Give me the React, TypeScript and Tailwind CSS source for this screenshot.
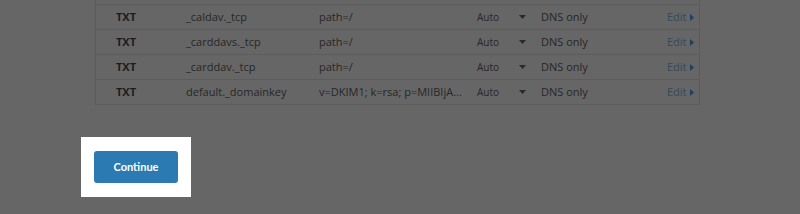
import React from "react";

const rows = [
  { type: "TXT", name: "_caldav._tcp", content: "path=/" },
  { type: "TXT", name: "_carddavs._tcp", content: "path=/" },
  { type: "TXT", name: "_carddav._tcp", content: "path=/" },
  { type: "TXT", name: "default._domainkey", content: "v=DKIM1; k=rsa; p=MIIBIjA..." },
];

export default function App() {
  return (
    <div className="w-[800px] h-[214px] bg-[#666666] overflow-hidden" style={{ fontFamily: '"Open Sans", "Noto Sans", sans-serif' }}>
      <div className="ml-[95px] w-[605px] border-x border-[#5c5c5c]">
        <div className="h-[5px] border-b border-[#5c5c5c]" />
        {rows.map((r, i) => (
          <div
            key={i}
            className="h-[25px] border-b border-[#5c5c5c] grid grid-cols-[70px_133px_158px_42px_22px_126px_1fr] items-center pl-[20px] text-[11px] text-[#262626]"
          >
            <span className="font-bold text-[#1c1c1c]">{r.type}</span>
            <span>{r.name}</span>
            <span className="whitespace-nowrap overflow-hidden">{r.content}</span>
            <span className="text-[10px]">Auto</span>
            <span className="flex items-center">
              <svg width="7" height="4" viewBox="0 0 7 4"><path d="M0 0h7L3.5 4z" fill="#2a2a2a" /></svg>
            </span>
            <span>DNS only</span>
            <span className="flex items-center text-[#34495d]">
              Edit
              <svg className="ml-[3px]" width="4" height="7" viewBox="0 0 4 7"><path d="M0 0l4 3.5-4 3.5z" fill="#1c3f63" /></svg>
            </span>
          </div>
        ))}
      </div>
      <div className="ml-[81px] mt-[32px] w-[110px] h-[60px] bg-white flex items-center justify-center">
        <button className="w-[84px] h-[32px] rounded-[3px] bg-[#2b7ab1] text-white text-[11px] font-bold" style={{ fontFamily: 'Lato, "Open Sans", sans-serif' }}>
          Continue
        </button>
      </div>
    </div>
  );
}
